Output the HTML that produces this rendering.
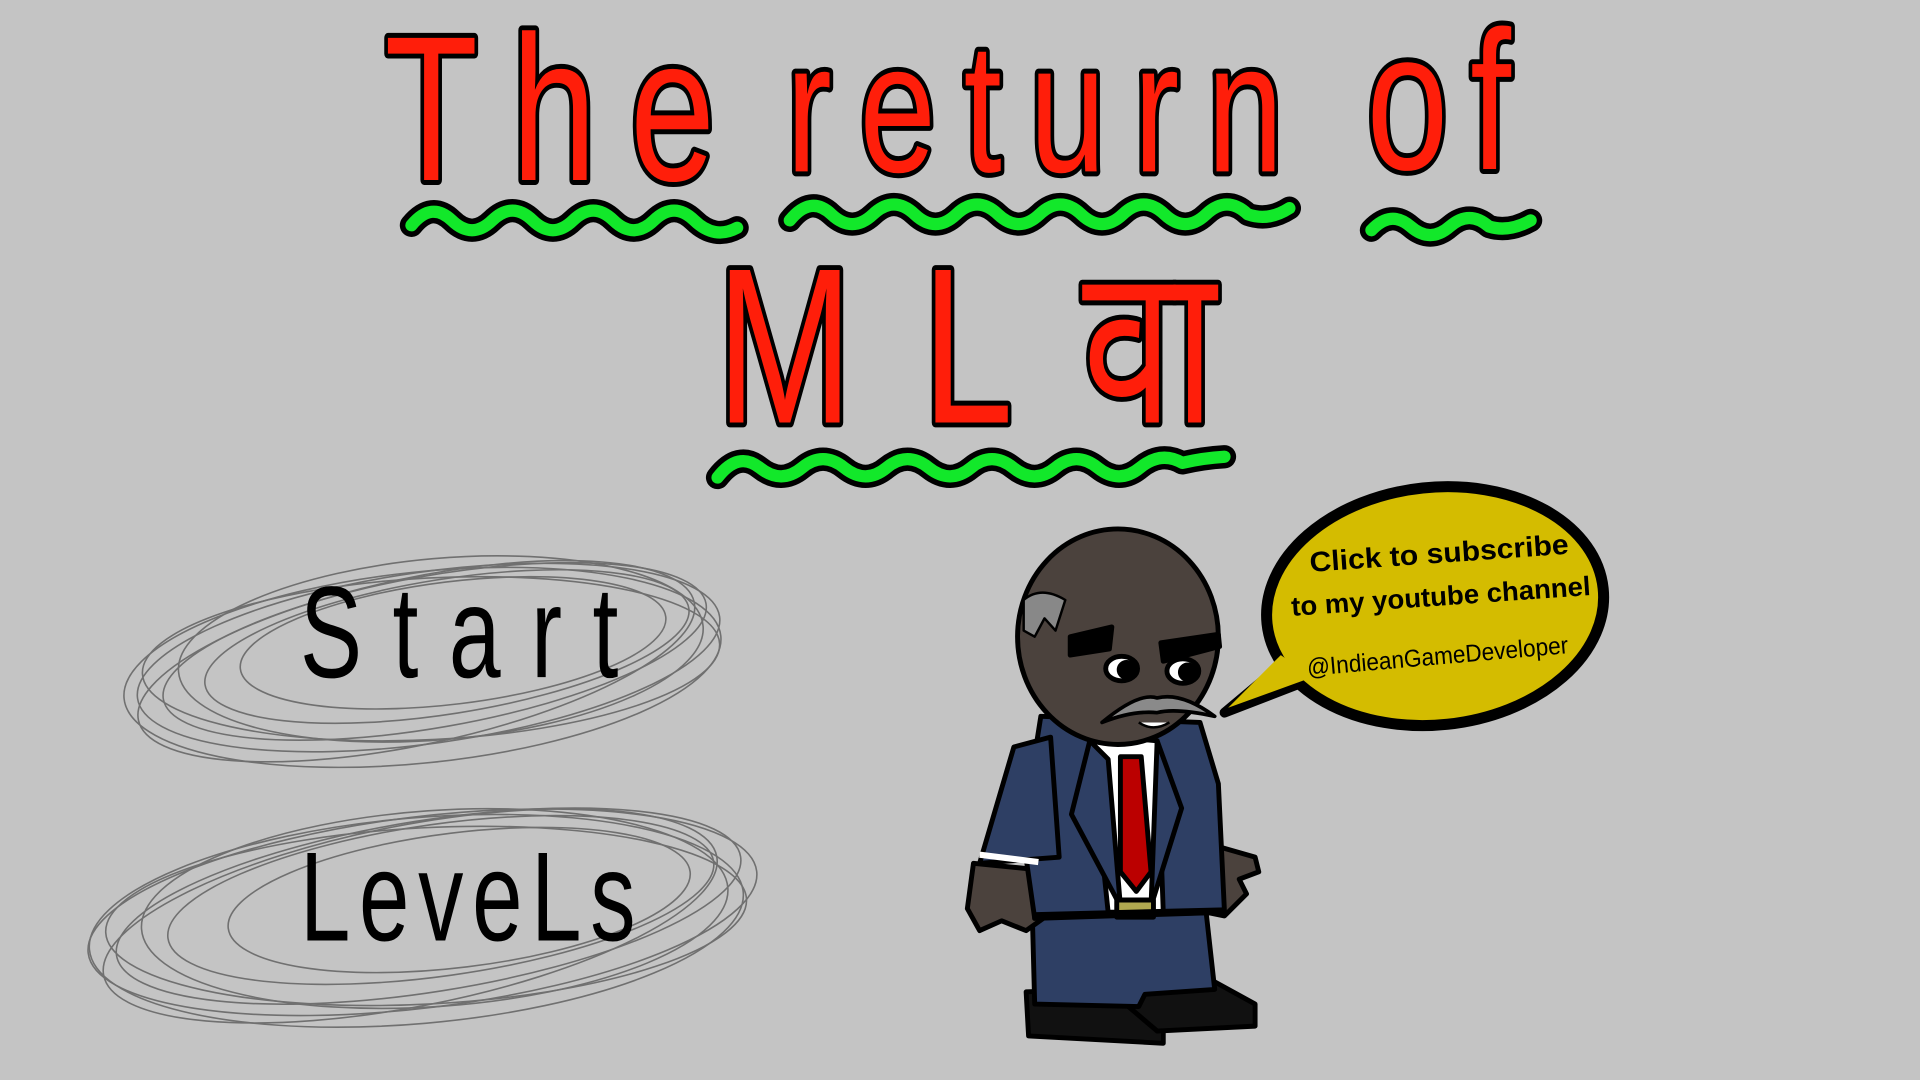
<!DOCTYPE html>
<html><head><meta charset="utf-8"><style>
html,body{margin:0;padding:0;background:#c4c4c4;overflow:hidden}
svg{display:block}
.t{font-family:"Liberation Sans",sans-serif;fill:#ff1e0a;stroke:#000;stroke-width:6;stroke-linejoin:round;paint-order:stroke}
.w{fill:none;stroke-linecap:round;stroke-linejoin:round}
.s{fill:none;stroke:#444;stroke-width:1.3;opacity:.65}
.h{font-family:"Liberation Sans",sans-serif;fill:#000}
</style></head><body>
<svg width="1920" height="1080" viewBox="0 0 1568 882" xmlns="http://www.w3.org/2000/svg">
<defs>
<path id="w1" d="M336 184 Q352.5 164 369 180 Q385.5 196 402 180 Q418.5 164 435 180 Q451.5 196 468 180 Q484.5 164 501 180 Q517.5 196 534 180 Q550.5 164 567 180 Q583.5 196 602 186"/>
<path id="w2" d="M645 180 Q662 159 679 175 Q696 191 713 175 Q730 159 747 175 Q764 191 781 175 Q798 159 815 175 Q832 191 849 175 Q866 159 883 175 Q900 191 917 175 Q934 159 951 175 Q968 191 985 175 Q1002 159 1019 175 Q1036 181 1053 170"/>
<path id="w3" d="M1120 188 Q1136 171 1152 185 Q1168 199 1184 185 Q1200 171 1216 185 Q1232 190 1250 180"/>
<path id="w4" d="M586 390 Q603 368 620.5 382 Q638 396 655 382 Q672 368 689.5 382 Q707 396 724 382 Q741 368 758.5 382 Q776 396 793 382 Q810 368 827.5 382 Q845 396 862 382 Q879 368 896.5 382 Q914 396 931 382 Q948 368 965.5 378 Q983 374 1000 373"/>
</defs>
<rect width="1568" height="882" fill="#c4c4c4"/>
<!-- title -->
<text class="t" transform="translate(314 147) scale(1 1.35)" font-size="125" textLength="270" lengthAdjust="spacing">The</text>
<text class="t" transform="translate(642 140) scale(1 1.35)" font-size="112" textLength="406" lengthAdjust="spacing">return</text>
<text class="t" transform="translate(1116 138) scale(1 1.35)" font-size="120" textLength="118" lengthAdjust="spacing">of</text>
<text class="t" transform="translate(585 345) scale(1 1.35)" font-size="134" textLength="408" lengthAdjust="spacing">MLवा</text>
<!-- waves -->
<g class="w" stroke="#000" stroke-width="19">
<use href="#w1"/><use href="#w2"/><use href="#w3"/><use href="#w4"/>
</g>
<g class="w" stroke="#12e82a" stroke-width="10">
<use href="#w1"/><use href="#w2"/><use href="#w3"/><use href="#w4"/>
</g>
<!-- scribbles -->
<g class="s">
<ellipse cx="350" cy="537" rx="240" ry="70" transform="rotate(-8 350 537)"/>
<ellipse cx="355" cy="532" rx="225" ry="62" transform="rotate(-10 355 532)"/>
<ellipse cx="345" cy="545" rx="245" ry="78" transform="rotate(-6 345 545)"/>
<ellipse cx="365" cy="528" rx="200" ry="55" transform="rotate(-9 365 528)"/>
<ellipse cx="340" cy="540" rx="232" ry="68" transform="rotate(-12 340 540)"/>
<ellipse cx="360" cy="530" rx="215" ry="74" transform="rotate(-5 360 530)"/>
<ellipse cx="370" cy="525" rx="175" ry="50" transform="rotate(-7 370 525)"/>
<ellipse cx="352" cy="538" rx="236" ry="66" transform="rotate(-3 352 538)"/>
<ellipse cx="345" cy="745" rx="275" ry="78" transform="rotate(-7 345 745)"/>
<ellipse cx="350" cy="740" rx="258" ry="70" transform="rotate(-9 350 740)"/>
<ellipse cx="340" cy="752" rx="268" ry="84" transform="rotate(-5 340 752)"/>
<ellipse cx="360" cy="735" rx="225" ry="62" transform="rotate(-8 360 735)"/>
<ellipse cx="335" cy="748" rx="255" ry="74" transform="rotate(-11 335 748)"/>
<ellipse cx="355" cy="742" rx="240" ry="80" transform="rotate(-4 355 742)"/>
<ellipse cx="375" cy="735" rx="190" ry="55" transform="rotate(-7 375 735)"/>
<ellipse cx="348" cy="748" rx="262" ry="72" transform="rotate(-3 348 748)"/>
</g>
<text class="h" transform="translate(245 553) scale(1 1.4)" font-size="76" textLength="260" lengthAdjust="spacing">Start</text>
<text class="h" transform="translate(245 768) scale(1 1.4)" font-size="74" textLength="274" lengthAdjust="spacing">LeveLs</text>
<!-- speech bubble -->
<path d="M1050 540 L1000 582 L1070 555 Z" fill="#d4bc00" stroke="#000" stroke-width="8" stroke-linejoin="round"/>
<ellipse cx="1172" cy="495" rx="138" ry="97" transform="rotate(-6 1172 495)" fill="#d4bc00" stroke="#000" stroke-width="9"/>
<path d="M1046 535 L1003 578 L1072 553" fill="#d4bc00"/>
<g font-family="Liberation Sans,sans-serif" fill="#000" font-weight="bold">
<text x="1070" y="467" font-size="23" transform="rotate(-4 1070 467)" textLength="212" lengthAdjust="spacingAndGlyphs">Click to subscribe</text>
<text x="1055" y="503" font-size="22" transform="rotate(-4 1055 503)" textLength="245" lengthAdjust="spacingAndGlyphs">to my  youtube channel</text>
<text x="1068" y="552" font-size="20" font-weight="normal" transform="rotate(-5 1068 552)" textLength="214" lengthAdjust="spacingAndGlyphs">@IndieanGameDeveloper</text>
</g>
<!-- character -->
<g stroke="#000" stroke-width="4" stroke-linejoin="round">
<path d="M838 810 L900 808 L950 830 L950 852 L840 846 Z" fill="#111"/>
<path d="M905 808 L985 798 L1025 820 L1025 838 L945 842 Z" fill="#111"/>
<path d="M843 745 L985 745 L992 808 L935 812 L930 822 L845 820 Z" fill="#2e3f64"/>
<path d="M795 705 L845 710 L852 750 L838 760 L818 752 L800 760 L790 742 Z" fill="#4b423d"/>
<path d="M990 690 L1025 700 L1028 712 L1012 718 L1018 730 L1000 748 L985 745 Z" fill="#4b423d"/>
<path d="M850 585 L980 590 L995 640 L1000 745 L845 750 L835 680 Z" fill="#2e3f64"/>
<path d="M890 600 L945 605 L950 745 L905 745 Z" fill="#fff"/>
<path d="M915 618 L932 618 L940 712 L928 728 L915 712 Z" fill="#b00"/>
<path d="M890 605 L905 620 L915 740 L875 665 Z" fill="#2e3f64"/>
<path d="M945 605 L940 740 L965 660 Z" fill="#2e3f64"/>
<rect x="912" y="735" width="30" height="14" fill="#b0a850"/>
<path d="M843 748 L1000 744" fill="none" stroke-width="6"/>
<path d="M828 610 L858 602 L865 700 L800 705 Z" fill="#2e3f64"/>
<path d="M800 698 L848 704" stroke="#fff" stroke-width="5"/>
<ellipse cx="913" cy="520" rx="82" ry="88" fill="#4b423d"/>
<path d="M836 490 Q850 478 870 490 L862 515 L853 505 L845 520 L836 515 Z" fill="#888" stroke-width="2"/>
<path d="M874 520 L908 512 L906 530 L874 535 Z" fill="#000"/>
<path d="M948 525 L995 518 L996 528 L950 540 Z" fill="#000"/>
<ellipse cx="916" cy="546" rx="13" ry="10" fill="#fff"/>
<ellipse cx="966" cy="548" rx="13" ry="10" fill="#fff"/>
<circle cx="920" cy="547" r="6" fill="#000"/>
<circle cx="970" cy="549" r="6" fill="#000"/>
<path d="M900 590 Q930 565 945 570 Q965 565 992 585 Q960 578 945 582 Q925 580 900 590 Z" fill="#8a8a8a" stroke-width="3"/>
<path d="M930 590 Q942 598 955 590" fill="#fff" stroke-width="2"/>
</g>
</svg>
</body></html>
